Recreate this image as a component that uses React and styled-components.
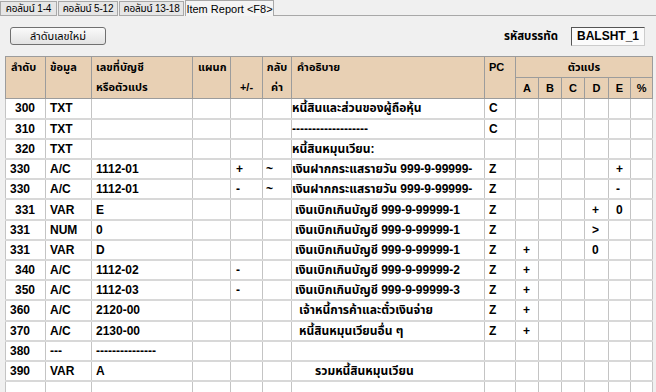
import React from 'react';
import styled, { createGlobalStyle } from 'styled-components';

const GlobalStyle = createGlobalStyle`
    html, body {
        margin: 0;
        padding: 0;
        background: #f0f0f0;
    }
    body {
        font-family: Tahoma, "Liberation Sans", "Noto Sans Thai", "Noto Sans", sans-serif;
        font-size: 11px;
        color: #000;
    }
`

const Page = styled.div`
    width: 656px;
    height: 392px;
    overflow: hidden;
    background: #f0f0f0;
`

const TabBar = styled.div`
    display: flex;
    align-items: flex-end;
    height: 16px;
`

const Tab = styled.div`
    display: flex;
    align-items: center;
    justify-content: center;
    box-sizing: border-box;
    width: ${props => props.$w}px;
    height: ${props => props.$active ? '16px' : '15px'};
    margin-right: ${props => props.$active ? '0' : '1px'};
    background: ${props => props.$active ? '#f4f4f4' : '#e6e6e6'};
    border: 1px solid #a8a8a8;
    border-bottom: ${props => props.$active ? 'none' : '1px solid #a8a8a8'};
    font-size: ${props => props.$active ? '11px' : '10px'};
    letter-spacing: ${props => props.$active ? '0' : '-0.2px'};
    white-space: nowrap;
    overflow: hidden;
`

const TabFill = styled.div`
    flex: 1;
    height: 1px;
    background: #a8a8a8;
`

const Toolbar = styled.div`
    display: flex;
    align-items: center;
    height: 40px;
    padding: 0 11px 0 10px;
`

const Button = styled.button`
    width: 96px;
    height: 18px;
    padding: 0;
    border: 1px solid #707070;
    border-radius: 3px;
    background: linear-gradient(#fafafa, #e2e2e2);
    font-family: inherit;
    font-size: 11px;
    color: #000;
`

const Spacer = styled.div`
    flex: 1;
`

const Label = styled.span`
    font-weight: bold;
    font-size: 11.5px;
    margin-right: 13px;
`

const CodeInput = styled.div`
    box-sizing: border-box;
    width: 74px;
    height: 19px;
    display: flex;
    align-items: center;
    padding-left: 5px;
    background: #fbfbfb;
    border: 1px solid #555;
    border-right-color: #ccc;
    border-bottom-color: #ccc;
    font-weight: bold;
    font-size: 12px;
`

const Grid = styled.table`
    margin-left: 5px;
    border-collapse: collapse;
    table-layout: fixed;
    width: 647px;
    font-weight: bold;
    font-size: 12px;
`

const HeadCell = styled.th`
    background: #e8d0b4;
    border: 1px solid #9c9c9c;
    padding: 0 0 0 ${props => props.$pad ?? 4}px;
    text-align: ${props => props.$center ? 'center' : 'left'};
    vertical-align: top;
    font-weight: bold;
    font-size: 11px;
    height: 20px;
    line-height: 20px;
    white-space: nowrap;
`

const HeadLine = styled.div`
    height: 20px;
    line-height: 20px;
`

const Row = styled.tr`
    height: 20.2px;
`

const Cell = styled.td`
    background: #fff;
    border-left: 1px solid #c4c4c4;
    border-right: 1px solid #c4c4c4;
    border-bottom: 2px solid #d8d8d8;
    padding: 0 0 0 ${props => props.$pad ?? 4}px;
    white-space: nowrap;
    overflow: hidden;
    line-height: 18px;
`

const tabs = [
    { label: 'คอลัมน์ 1-4', w: 57 },
    { label: 'คอลัมน์ 5-12', w: 60 },
    { label: 'คอลัมน์ 13-18', w: 65 },
];

const widths = [40, 46, 101, 38, 32, 29, 193, 31, 23, 23, 23, 24, 22, 22];
const varKeys = ['A', 'B', 'C', 'D', 'E', '%'];

const rows = [
    { seq: '300', lead: true, type: 'TXT', desc: 'หนี้สินและส่วนของผู้ถือหุ้น', pc: 'C' },
    { seq: '310', lead: true, type: 'TXT', desc: '-------------------', pc: 'C' },
    { seq: '320', lead: true, type: 'TXT', desc: 'หนี้สินหมุนเวียน:' },
    { seq: '330', type: 'A/C', acct: '1112-01', sign: '+', rev: '~', desc: 'เงินฝากกระแสรายวัน 999-9-99999-', pc: 'Z', vars: { E: '+' } },
    { seq: '330', type: 'A/C', acct: '1112-01', sign: '-', rev: '~', desc: 'เงินฝากกระแสรายวัน 999-9-99999-', pc: 'Z', vars: { E: '-' } },
    { seq: '331', lead: true, type: 'VAR', acct: 'E', indent: 1, desc: 'เงินเบิกเกินบัญชี 999-9-99999-1', pc: 'Z', vars: { D: '+', E: '0' } },
    { seq: '331', type: 'NUM', acct: '0', indent: 1, desc: 'เงินเบิกเกินบัญชี 999-9-99999-1', pc: 'Z', vars: { D: '>' } },
    { seq: '331', type: 'VAR', acct: 'D', indent: 1, desc: 'เงินเบิกเกินบัญชี 999-9-99999-1', pc: 'Z', vars: { A: '+', D: '0' } },
    { seq: '340', lead: true, type: 'A/C', acct: '1112-02', sign: '-', indent: 1, desc: 'เงินเบิกเกินบัญชี 999-9-99999-2', pc: 'Z', vars: { A: '+' } },
    { seq: '350', lead: true, type: 'A/C', acct: '1112-03', sign: '-', indent: 1, desc: 'เงินเบิกเกินบัญชี 999-9-99999-3', pc: 'Z', vars: { A: '+' } },
    { seq: '360', type: 'A/C', acct: '2120-00', indent: 2, desc: 'เจ้าหนี้การค้าและตั๋วเงินจ่าย', pc: 'Z', vars: { A: '+' } },
    { seq: '370', type: 'A/C', acct: '2130-00', indent: 2, desc: 'หนี้สินหมุนเวียนอื่น ๆ', pc: 'Z', vars: { A: '+' } },
    { seq: '380', type: '---', acct: '---------------' },
    { seq: '390', type: 'VAR', acct: 'A', indent: 6, desc: 'รวมหนี้สินหมุนเวียน' },
    { seq: '' },
];

const App = () => {
    return (
        <Page>
            <GlobalStyle />
            <TabBar>
                {tabs.map(t => (
                    <Tab key={t.label} $w={t.w}>{t.label}</Tab>
                ))}
                <Tab $active $w={89}>Item Report &lt;F8&gt;</Tab>
                <TabFill />
            </TabBar>

            <Toolbar>
                <Button>ลำดับเลขใหม่</Button>
                <Spacer />
                <Label>รหัสบรรทัด</Label>
                <CodeInput>BALSHT_1</CodeInput>
            </Toolbar>

            <Grid>
                <colgroup>
                    {widths.map((w, i) => <col key={i} style={{ width: w }} />)}
                </colgroup>
                <thead>
                    <tr>
                        <HeadCell rowSpan={2} $pad={5}>ลำดับ</HeadCell>
                        <HeadCell rowSpan={2}>ข้อมูล</HeadCell>
                        <HeadCell rowSpan={2}>
                            <HeadLine>เลขที่บัญชี</HeadLine>
                            <HeadLine>หรือตัวแปร</HeadLine>
                        </HeadCell>
                        <HeadCell rowSpan={2} $pad={5}>แผนก</HeadCell>
                        <HeadCell rowSpan={2} $center $pad={0}>
                            <HeadLine />
                            <HeadLine>+/-</HeadLine>
                        </HeadCell>
                        <HeadCell rowSpan={2} $center $pad={0}>
                            <HeadLine>กลับ</HeadLine>
                            <HeadLine>ค่า</HeadLine>
                        </HeadCell>
                        <HeadCell rowSpan={2} $pad={5}>คำอธิบาย</HeadCell>
                        <HeadCell rowSpan={2}>PC</HeadCell>
                        <HeadCell colSpan={6} $center $pad={0}>ตัวแปร</HeadCell>
                    </tr>
                    <tr>
                        {varKeys.map(k => (
                            <HeadCell key={k} $center $pad={0}>{k}</HeadCell>
                        ))}
                    </tr>
                </thead>
                <tbody>
                    {rows.map((r, i) => (
                        <Row key={i}>
                            <Cell $pad={r.lead ? 9 : 4}>{r.seq}</Cell>
                            <Cell>{r.type}</Cell>
                            <Cell>{r.acct}</Cell>
                            <Cell />
                            <Cell $pad={5}>{r.sign}</Cell>
                            <Cell $pad={3}>{r.rev}</Cell>
                            <Cell $pad={r.indent ? r.indent * 4 - 1 : 0}>{r.desc}</Cell>
                            <Cell>{r.pc}</Cell>
                            {varKeys.map(k => (
                                <Cell key={k} $pad={7}>{r.vars?.[k]}</Cell>
                            ))}
                        </Row>
                    ))}
                </tbody>
            </Grid>
        </Page>
    )
}

export default App
